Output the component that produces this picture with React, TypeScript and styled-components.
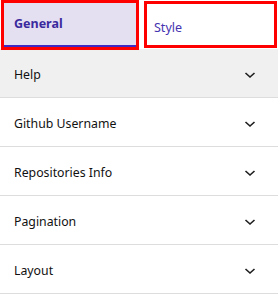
import React from 'react';
import styled, { createGlobalStyle } from 'styled-components';

const GlobalStyle = createGlobalStyle`
  body {
    margin: 0;
    background: #ffffff;
    font-family: "Noto Sans", "Open Sans", sans-serif;
  }
`;

const Panel = styled.div`
  width: 278px;
  display: flex;
  flex-direction: column;
`;

const TabList = styled.div`
  height: 49px;
  display: flex;
  align-items: flex-start;
  gap: 11px;
  padding: 3px 4px 0 4px;
  box-sizing: border-box;
  position: relative;
  z-index: 1;
`;

const Tab = styled.button<{ $active?: boolean }>`
  box-sizing: border-box;
  height: ${(p) => (p.$active ? '44px' : '41px')};
  margin-top: ${(p) => (p.$active ? '0' : '1px')};
  width: ${(p) => (p.$active ? '132px' : '127px')};
  padding: ${(p) => (p.$active ? '0 0 2px 10px' : '5px 0 0 7px')};
  border: none;
  border-bottom: ${(p) => (p.$active ? '2px solid #3f2bc4' : 'none')};
  outline: 3px solid #ff0000;
  background: ${(p) => (p.$active ? '#e4dff1' : '#ffffff')};
  color: ${(p) => (p.$active ? '#3a2a9e' : '#4533b0')};
  font-family: inherit;
  font-size: 12.5px;
  font-weight: ${(p) => (p.$active ? 700 : 400)};
  text-align: left;
  cursor: pointer;
`;

const Row = styled.div<{ $shaded?: boolean }>`
  height: 49px;
  box-sizing: border-box;
  display: flex;
  align-items: center;
  justify-content: space-between;
  padding: 3px 22px 0 14px;
  background: ${(p) => (p.$shaded ? '#f0f0f0' : '#ffffff')};
  border-bottom: 1px solid #dddddd;
  color: #111111;
  font-size: 12.3px;
  font-weight: 400;
`;

const Chevron = () => (
  <svg width="12" height="12" viewBox="0 0 12 12" fill="none">
    <path d="M1.5 4l4.5 4 4.5-4" stroke="#1e1e1e" strokeWidth="1.6" />
  </svg>
);

const sections = ['Help', 'Github Username', 'Repositories Info', 'Pagination', 'Layout'];

export default function App() {
  return (
    <>
      <GlobalStyle />
      <Panel>
        <TabList>
          <Tab $active>General</Tab>
          <Tab>Style</Tab>
        </TabList>
        {sections.map((s, i) => (
          <Row key={s} $shaded={i === 0}>
            <span>{s}</span>
            <Chevron />
          </Row>
        ))}
      </Panel>
    </>
  );
}
